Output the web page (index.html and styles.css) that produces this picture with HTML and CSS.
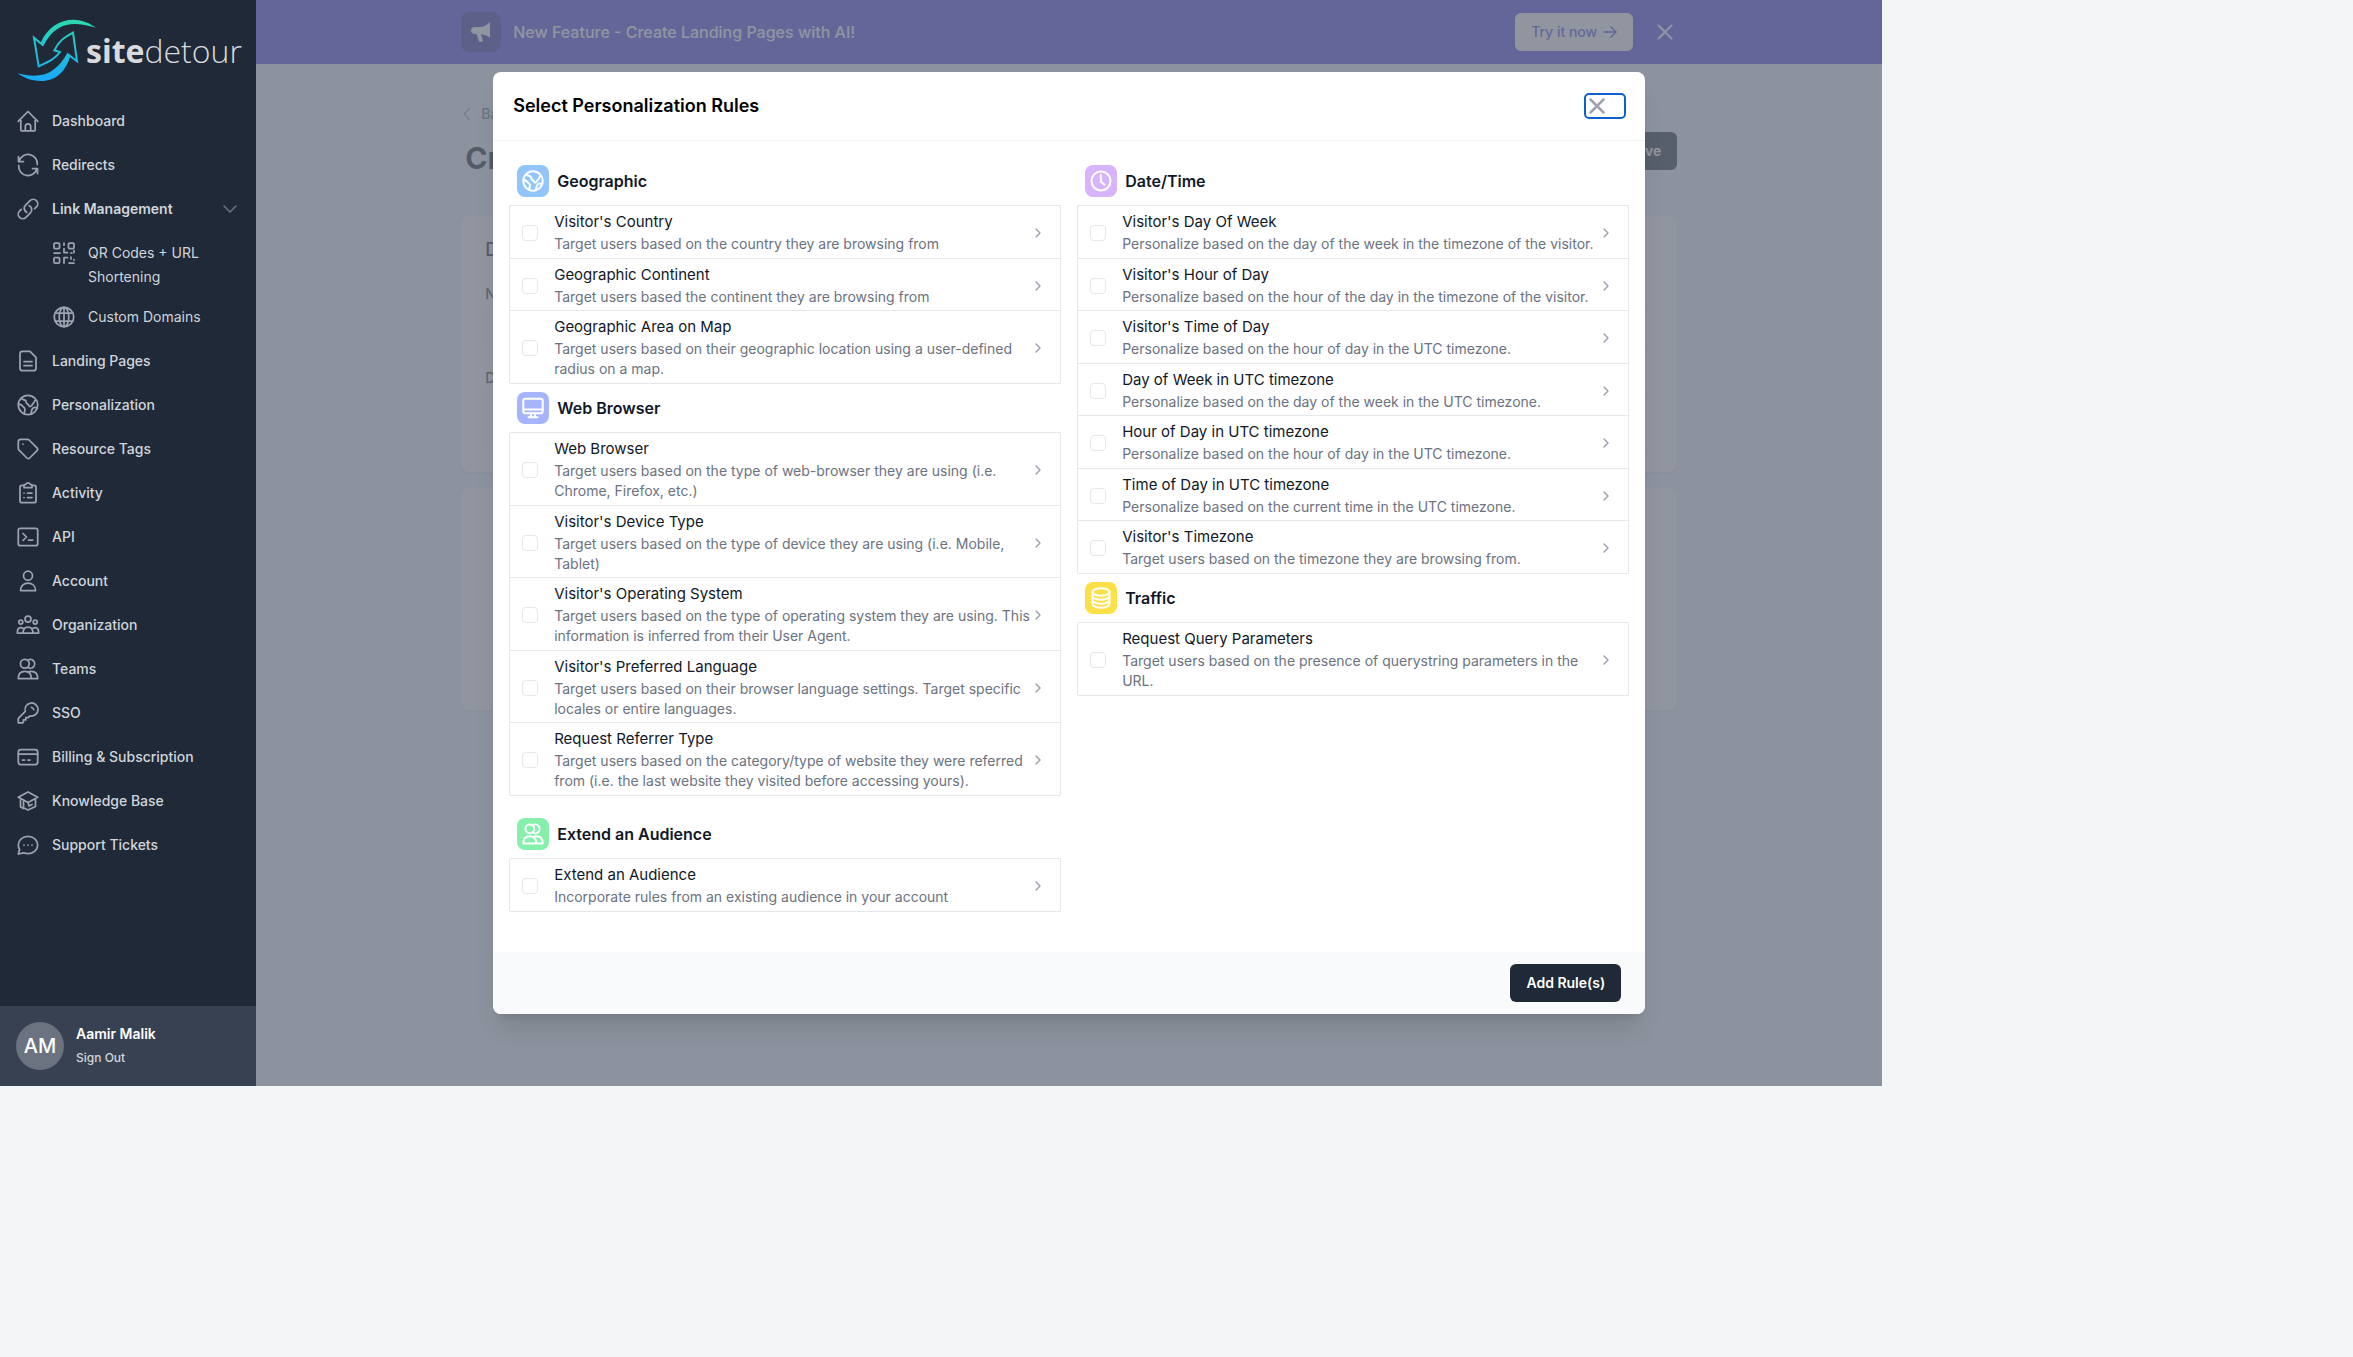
FILE: index.html
```
<!DOCTYPE html>
<html lang="en">
<head>
    <meta charset="UTF-8">
    <meta name="viewport" content="width=device-width, initial-scale=1.0">
    <title>Select Personalization Rules</title>
    <link rel="stylesheet" href="styles.css">
</head>
<body>
    <!-- Shared icons -->
    <svg class="sprite" aria-hidden="true">
        <symbol id="i-home" viewBox="0 0 24 24"><path d="M2.2 12.3 12 2.5l9.8 9.8M4.8 9.8v11c0 .6.4 1 1 1h12.4c.6 0 1-.4 1-1v-11M9.3 21.8v-4.3a2.7 2.7 0 0 1 5.4 0v4.3"/></symbol>
        <symbol id="i-refresh" viewBox="0 0 24 24"><path d="M2.5 3.5v5h5M3 8.5a9.3 9.3 0 0 1 18.3 3M21.5 20.5v-5h-5M21 15.5a9.3 9.3 0 0 1-18.3-3"/></symbol>
        <symbol id="i-link" viewBox="0 0 24 24"><path d="M13.19 8.688a4.5 4.5 0 0 1 1.242 7.244l-4.5 4.5a4.5 4.5 0 0 1-6.364-6.364l1.757-1.757m13.35-.622 1.757-1.757a4.5 4.5 0 0 0-6.364-6.364l-4.5 4.5a4.5 4.5 0 0 0 1.242 7.244"/></symbol>
        <symbol id="i-qr" viewBox="0 0 24 24"><rect x="2" y="2" width="5.5" height="5.5" rx="1"/><rect x="16.5" y="2" width="5.5" height="5.5" rx="1"/><rect x="2" y="16.5" width="5.5" height="5.5" rx="1"/><path d="M12 2v2M12 7.500v4h3.500M2 12h6M19 12h1M22 9.500v2M12 22v-5.500h3.500M19 16v2M17 22h5M22 18.500v.5"/></symbol>
        <symbol id="i-globe" viewBox="0 0 24 24"><circle cx="12" cy="12" r="9.7"/><ellipse cx="12" cy="12" rx="4.8" ry="9.7"/><path d="M12 2.3v19.4M3.3 8h17.4M3.3 16h17.4"/></symbol>
        <symbol id="i-doc" viewBox="0 0 24 24"><path d="M14 2.300H6.500a2.500 2.500 0 0 0-2.500 2.500v14.400a2.500 2.500 0 0 0 2.500 2.500h11a2.500 2.500 0 0 0 2.500-2.500V8.300zM8 12.500h8M8 16.500h8"/></symbol>
        <symbol id="i-world" viewBox="0 0 24 24"><circle cx="12" cy="12" r="9.7"/><path d="M5.500 5c1 2.500 2.700 1.500 4 2.500s0 2.700 2 3.500 1 3 3 2.500 1.500-2.500 3-3.500.5-2.500 2-3M2.500 11c2 0 3 .5 4 2s2.700 1.500 2.500 3.500-1 3-.8 4.500M21 15c-2-1-4.500-.5-5 1.500s-1 2.500-.8 4.500"/></symbol>
        <symbol id="i-tag" viewBox="0 0 24 24"><path d="M2.300 4.800a2.500 2.500 0 0 1 2.500-2.500h6.500c.7 0 1.300.3 1.800.7l7.900 7.900a2 2 0 0 1 0 2.800l-7.300 7.300a2 2 0 0 1-2.800 0L3 13.100a2.500 2.500 0 0 1-.7-1.800zM7 7h.01"/></symbol>
        <symbol id="i-clipboard" viewBox="0 0 24 24"><path d="M8 4.300H6a2 2 0 0 0-2 2v13.400a2 2 0 0 0 2 2h12a2 2 0 0 0 2-2V6.300a2 2 0 0 0-2-2h-2M8 6.500h8V4.800a1.500 1.500 0 0 0-1.500-1.500h-.4a2.200 2.200 0 0 0-4.200 0h-.4A1.500 1.500 0 0 0 8 4.800zM8 12h.01M11.500 12H16M8 16.500h.01M11.500 16.500H16"/></symbol>
        <symbol id="i-terminal" viewBox="0 0 24 24"><rect x="2.3" y="3.3" width="19.4" height="17.4" rx="2"/><path d="m7 8.500 3.500 3.500L7 15.500M12.500 15h4.200"/></symbol>
        <symbol id="i-user" viewBox="0 0 24 24"><circle cx="12" cy="6.7" r="4.5"/><path d="M4.500 21.500c0-4.700 3.300-7.300 7.500-7.300s7.500 2.600 7.500 7.300z"/></symbol>
        <symbol id="i-group" viewBox="0 0 24 24"><circle cx="12" cy="6" r="3"/><circle cx="4.8" cy="9" r="2"/><circle cx="19.2" cy="9" r="2"/><path d="M7 20c0-3.700 2-6 5-6s5 2.300 5 6zM7 20H1.300c0-3.700 1.400-5.500 3.500-5.500 1 0 1.900.3 2.500 1M17 20h5.700c0-3.700-1.400-5.500-3.500-5.500-1 0-1.900.3-2.500 1"/></symbol>
        <symbol id="i-users" viewBox="0 0 24 24"><circle cx="8.8" cy="6.8" r="4.4"/><path d="M11.500 3.400a4.400 4.400 0 1 1 0 6.900M2.300 21.500c0-4.500 2.500-7.200 6.500-7.200s6.500 2.700 6.500 7.200zM12 14.800c1-.3 2-.5 3.200-.5 4 0 6.500 2.700 6.500 7.200h-6.400"/></symbol>
        <symbol id="i-key" viewBox="0 0 24 24"><path d="M9.300 10.300A6.500 6.500 0 1 1 14 14.800l-1.800 1.700h-2.400v2.400H7.400v2.300l-.8.600H2.300v-4.500zM15.500 6.500c1.200.2 2 .9 2.200 2.200"/></symbol>
        <symbol id="i-card" viewBox="0 0 24 24"><rect x="2.3" y="4.5" width="19.4" height="15" rx="2.5"/><path d="M2.300 9h19.400M6.500 15h2M12 15h2"/></symbol>
        <symbol id="i-cap" viewBox="0 0 24 24"><path d="M2.300 8.300 12 3l9.700 5.300L12 13.500 7.500 11v8.500M2.300 8.300l5.200 2.700M4.500 11v7l3 1.500M19.500 10.500v7L12 21l-3-1.500M12 13.500l1 3.500 3-1.500"/></symbol>
        <symbol id="i-chat" viewBox="0 0 24 24"><path d="M12 3.300c5.400 0 9.700 3.900 9.700 8.700s-4.300 8.700-9.700 8.700c-1.500 0-3-.3-4.200-.9L2.300 21l1.300-4.500A8.200 8.200 0 0 1 2.300 12c0-4.800 4.300-8.700 9.700-8.700zM8 12h.01M12 12h.01M16 12h.01"/></symbol>
        <symbol id="i-monitor" viewBox="0 0 24 24"><rect x="2.3" y="2.8" width="19.4" height="14.5" rx="2"/><path d="M2.300 13.500h19.400M10 17.500v3.300M14 17.500v3.300M7.500 21.200h9"/></symbol>
        <symbol id="i-clock" viewBox="0 0 24 24"><circle cx="12" cy="12" r="9.5"/><path d="M11.800 6v6.500l3.700 3.200"/></symbol>
        <symbol id="i-database" viewBox="0 0 24 24"><ellipse cx="12" cy="6" rx="8.5" ry="3.7"/><path d="M3.500 6v12c0 2 3.800 3.700 8.500 3.700s8.500-1.700 8.500-3.700V6M3.500 10c0 2 3.800 3.700 8.500 3.700s8.500-1.700 8.500-3.700M3.500 14c0 2 3.800 3.700 8.500 3.700s8.500-1.700 8.500-3.700"/></symbol>
        <symbol id="i-close" viewBox="0 0 24 24"><path d="m5.500 5.500 13 13M18.500 5.500l-13 13"/></symbol>
        <symbol id="i-chevron" viewBox="0 0 8 12"><path d="m2 2 4 4-4 4"/></symbol>
    </svg>

    <div class="app">
        <aside class="sidebar">
            <a class="logo" href="#">
                <svg class="logo-mark" viewBox="18 24 240 195" aria-hidden="true">
                    <defs>
                        <linearGradient id="logo-line" gradientUnits="userSpaceOnUse" x1="0" y1="30" x2="0" y2="215">
                            <stop offset="0" stop-color="#2cd9b0"/>
                            <stop offset="1" stop-color="#18a8fb"/>
                        </linearGradient>
                    </defs>
                    <path fill="url(#logo-line)" d="M92 98C112 52 150 29 190 29c28 0 50 11 68 24-46-14-82-16-110 0-22 13-36 31-48 55z"/>
                    <path fill="url(#logo-line)" d="M22 190c46 12 82 10 110-12 18-14 30-30 40-50l9 10c-14 46-42 75-88 75-30 0-52-10-71-23z"/>
                    <path fill="none" stroke="url(#logo-line)" stroke-width="6" stroke-linejoin="miter" d="M98 105 72 83l14 86c38-18 52-26 64-43l-17-5c14-28 28-38 56-53l12 86-26-20"/>
                </svg>
                <span class="logo-text"><b>site</b>detour</span>
            </a>
            <nav class="nav">
                <a class="nav-item" href="#"><svg class="icon"><use href="#i-home"/></svg>Dashboard</a>
                <a class="nav-item" href="#"><svg class="icon"><use href="#i-refresh"/></svg>Redirects</a>
                <button class="nav-item nav-toggle" type="button">
                    <svg class="icon"><use href="#i-link"/></svg>Link Management
                    <svg class="nav-arrow" viewBox="0 0 20 20"><path d="m4 7 6 6 6-6"/></svg>
                </button>
                <div class="subnav">
                    <a class="nav-item" href="#"><svg class="icon"><use href="#i-qr"/></svg>QR Codes + URL Shortening</a>
                    <a class="nav-item" href="#"><svg class="icon"><use href="#i-globe"/></svg>Custom Domains</a>
                </div>
                <a class="nav-item" href="#"><svg class="icon"><use href="#i-doc"/></svg>Landing Pages</a>
                <a class="nav-item" href="#"><svg class="icon"><use href="#i-world"/></svg>Personalization</a>
                <a class="nav-item" href="#"><svg class="icon"><use href="#i-tag"/></svg>Resource Tags</a>
                <a class="nav-item" href="#"><svg class="icon"><use href="#i-clipboard"/></svg>Activity</a>
                <a class="nav-item" href="#"><svg class="icon"><use href="#i-terminal"/></svg>API</a>
                <a class="nav-item" href="#"><svg class="icon"><use href="#i-user"/></svg>Account</a>
                <a class="nav-item" href="#"><svg class="icon"><use href="#i-group"/></svg>Organization</a>
                <a class="nav-item" href="#"><svg class="icon"><use href="#i-users"/></svg>Teams</a>
                <a class="nav-item" href="#"><svg class="icon"><use href="#i-key"/></svg>SSO</a>
                <a class="nav-item" href="#"><svg class="icon"><use href="#i-card"/></svg>Billing &amp; Subscription</a>
                <a class="nav-item" href="#"><svg class="icon"><use href="#i-cap"/></svg>Knowledge Base</a>
                <a class="nav-item" href="#"><svg class="icon"><use href="#i-chat"/></svg>Support Tickets</a>
            </nav>
            <div class="profile">
                <span class="avatar">AM</span>
                <div>
                    <p class="profile-name">Aamir Malik</p>
                    <a class="sign-out" href="#">Sign Out</a>
                </div>
            </div>
        </aside>

        <div class="main">
            <div class="banner">
                <div class="container banner-inner">
                    <span class="banner-icon">
                        <svg viewBox="0 0 24 24"><path d="M21 2v15.500c-3-2-6-3-9-3.200l2 6.700c-1.500 1-3 1.200-4 .5L7.500 14H6c-2.500 0-4-1.500-4-3.500S3.500 7 6 7h4c4 0 8-2 11-5z"/></svg>
                    </span>
                    <p class="banner-text">New Feature - Create Landing Pages with AI!</p>
                    <a class="banner-link" href="#">Try it now <svg viewBox="0 0 14 12"><path d="M1 6h12M8 1l5 5-5 5"/></svg></a>
                    <button class="banner-close" type="button" aria-label="Dismiss"><svg class="icon"><use href="#i-close"/></svg></button>
                </div>
            </div>
            <div class="container page">
                <a class="back" href="#"><svg viewBox="0 0 20 20"><path d="m12.500 4-5 6 5 6"/></svg>Back</a>
                <div class="page-head">
                    <h1>Create</h1>
                    <button class="save" type="button">Save</button>
                </div>
                <div class="card card-details">
                    <h2>Details</h2>
                    <label for="name">Name</label>
                    <input id="name" type="text">
                    <label for="description">Description</label>
                    <textarea id="description"></textarea>
                </div>
                <div class="card card-rules"></div>
            </div>

            <div class="overlay">
                <div class="modal" role="dialog" aria-labelledby="modal-title">
                    <div class="modal-head">
                        <h2 id="modal-title">Select Personalization Rules</h2>
                        <button class="modal-close" type="button" aria-label="Close"><svg class="icon"><use href="#i-close"/></svg></button>
                    </div>
                    <div class="modal-body">
                        <div class="column">
                            <h3 class="group-title"><span class="badge blue"><svg class="icon"><use href="#i-world"/></svg></span>Geographic</h3>
                            <div class="rules">
                                <label class="rule"><input type="checkbox"><span class="rule-text"><span class="rule-name">Visitor's Country</span><span class="rule-desc">Target users based on the country they are browsing from</span></span><svg class="chevron"><use href="#i-chevron"/></svg></label>
                                <label class="rule"><input type="checkbox"><span class="rule-text"><span class="rule-name">Geographic Continent</span><span class="rule-desc">Target users based the continent they are browsing from</span></span><svg class="chevron"><use href="#i-chevron"/></svg></label>
                                <label class="rule"><input type="checkbox"><span class="rule-text"><span class="rule-name">Geographic Area on Map</span><span class="rule-desc">Target users based on their geographic location using a user-defined radius on a map.</span></span><svg class="chevron"><use href="#i-chevron"/></svg></label>
                            </div>
                            <h3 class="group-title"><span class="badge indigo"><svg class="icon"><use href="#i-monitor"/></svg></span>Web Browser</h3>
                            <div class="rules">
                                <label class="rule"><input type="checkbox"><span class="rule-text"><span class="rule-name">Web Browser</span><span class="rule-desc">Target users based on the type of web-browser they are using (i.e. Chrome, Firefox, etc.)</span></span><svg class="chevron"><use href="#i-chevron"/></svg></label>
                                <label class="rule"><input type="checkbox"><span class="rule-text"><span class="rule-name">Visitor's Device Type</span><span class="rule-desc">Target users based on the type of device they are using (i.e. Mobile, Tablet)</span></span><svg class="chevron"><use href="#i-chevron"/></svg></label>
                                <label class="rule"><input type="checkbox"><span class="rule-text"><span class="rule-name">Visitor's Operating System</span><span class="rule-desc">Target users based on the type of operating system they are using. This information is inferred from their User Agent.</span></span><svg class="chevron"><use href="#i-chevron"/></svg></label>
                                <label class="rule"><input type="checkbox"><span class="rule-text"><span class="rule-name">Visitor's Preferred Language</span><span class="rule-desc">Target users based on their browser language settings. Target specific locales or entire languages.</span></span><svg class="chevron"><use href="#i-chevron"/></svg></label>
                                <label class="rule"><input type="checkbox"><span class="rule-text"><span class="rule-name">Request Referrer Type</span><span class="rule-desc">Target users based on the category/type of website they were referred from (i.e. the last website they visited before accessing yours).</span></span><svg class="chevron"><use href="#i-chevron"/></svg></label>
                            </div>
                            <h3 class="group-title spaced"><span class="badge green"><svg class="icon"><use href="#i-users"/></svg></span>Extend an Audience</h3>
                            <div class="rules">
                                <label class="rule"><input type="checkbox"><span class="rule-text"><span class="rule-name">Extend an Audience</span><span class="rule-desc">Incorporate rules from an existing audience in your account</span></span><svg class="chevron"><use href="#i-chevron"/></svg></label>
                            </div>
                        </div>
                        <div class="column">
                            <h3 class="group-title"><span class="badge purple"><svg class="icon"><use href="#i-clock"/></svg></span>Date/Time</h3>
                            <div class="rules">
                                <label class="rule"><input type="checkbox"><span class="rule-text"><span class="rule-name">Visitor's Day Of Week</span><span class="rule-desc">Personalize based on the day of the week in the timezone of the visitor.</span></span><svg class="chevron"><use href="#i-chevron"/></svg></label>
                                <label class="rule"><input type="checkbox"><span class="rule-text"><span class="rule-name">Visitor's Hour of Day</span><span class="rule-desc">Personalize based on the hour of the day in the timezone of the visitor.</span></span><svg class="chevron"><use href="#i-chevron"/></svg></label>
                                <label class="rule"><input type="checkbox"><span class="rule-text"><span class="rule-name">Visitor's Time of Day</span><span class="rule-desc">Personalize based on the hour of day in the UTC timezone.</span></span><svg class="chevron"><use href="#i-chevron"/></svg></label>
                                <label class="rule"><input type="checkbox"><span class="rule-text"><span class="rule-name">Day of Week in UTC timezone</span><span class="rule-desc">Personalize based on the day of the week in the UTC timezone.</span></span><svg class="chevron"><use href="#i-chevron"/></svg></label>
                                <label class="rule"><input type="checkbox"><span class="rule-text"><span class="rule-name">Hour of Day in UTC timezone</span><span class="rule-desc">Personalize based on the hour of day in the UTC timezone.</span></span><svg class="chevron"><use href="#i-chevron"/></svg></label>
                                <label class="rule"><input type="checkbox"><span class="rule-text"><span class="rule-name">Time of Day in UTC timezone</span><span class="rule-desc">Personalize based on the current time in the UTC timezone.</span></span><svg class="chevron"><use href="#i-chevron"/></svg></label>
                                <label class="rule"><input type="checkbox"><span class="rule-text"><span class="rule-name">Visitor's Timezone</span><span class="rule-desc">Target users based on the timezone they are browsing from.</span></span><svg class="chevron"><use href="#i-chevron"/></svg></label>
                            </div>
                            <h3 class="group-title"><span class="badge yellow"><svg class="icon"><use href="#i-database"/></svg></span>Traffic</h3>
                            <div class="rules">
                                <label class="rule"><input type="checkbox"><span class="rule-text"><span class="rule-name">Request Query Parameters</span><span class="rule-desc">Target users based on the presence of querystring parameters in the URL.</span></span><svg class="chevron"><use href="#i-chevron"/></svg></label>
                            </div>
                        </div>
                    </div>
                    <div class="modal-foot">
                        <button class="add-rules" type="button">Add Rule(s)</button>
                    </div>
                </div>
            </div>
        </div>
    </div>
</body>
</html>
```
FILE: styles.css
```
* {
    box-sizing: border-box;
}
body {
    margin: 0;
    background-color: #f3f5f7;
    font-family: Inter, "Liberation Sans", sans-serif;
    font-size: 14px;
    line-height: 20px;
    color: #111827;
}
h1, h2, h3, p {
    margin: 0;
}
a {
    color: inherit;
    text-decoration: none;
}
button {
    font: inherit;
    border: none;
    padding: 0;
    background: none;
    cursor: pointer;
}
svg {
    flex-shrink: 0;
    fill: none;
    stroke: currentColor;
    stroke-width: 1.5;
    stroke-linecap: round;
    stroke-linejoin: round;
}
.sprite {
    display: none;
}
.icon {
    width: 24px;
    height: 24px;
}
.app {
    display: flex;
    width: 80vw;
    height: 80vh;
    overflow: hidden;
}

/* Sidebar */
.sidebar {
    display: flex;
    flex-direction: column;
    width: 256px;
    flex-shrink: 0;
    background-color: #1f2937;
}
.logo {
    display: flex;
    align-items: center;
    padding: 18px 16px;
}
.logo-mark {
    width: 80px;
    height: 65px;
    stroke: none;
}
.logo-text {
    margin-left: -10px;
    font-family: "Open Sans", "Noto Sans", sans-serif;
    font-size: 32px;
    font-weight: 300;
    line-height: 40px;
    color: #d9dadd;
}
.logo-text b {
    font-weight: 700;
}
.nav {
    flex: 1;
    display: flex;
    flex-direction: column;
    gap: 4px;
    padding: 0 8px;
}
.nav-item {
    display: flex;
    align-items: flex-start;
    gap: 12px;
    padding: 8px;
    font-weight: 500;
    line-height: 24px;
    text-align: left;
    color: #d1d5db;
}
.nav-item .icon {
    stroke-width: 1.75;
    color: #9ca3af;
}
.nav-toggle {
    font-weight: 600;
}
.nav-arrow {
    width: 20px;
    height: 20px;
    margin: 2px 0 0 auto;
    color: #6b7280;
}
.subnav {
    padding-left: 36px;
}
.subnav .nav-item {
    font-weight: 400;
}
.profile {
    display: flex;
    align-items: center;
    gap: 12px;
    height: 80px;
    padding: 16px;
    background-color: #374151;
}
.avatar {
    display: flex;
    align-items: center;
    justify-content: center;
    width: 48px;
    height: 48px;
    border-radius: 50%;
    background-color: #6b7280;
    color: #fff;
    font-size: 20px;
    font-weight: 500;
}
.profile-name {
    font-weight: 600;
    line-height: 24px;
    color: #fff;
}
.sign-out {
    display: block;
    font-size: 12px;
    font-weight: 500;
    line-height: 24px;
    color: #d1d5db;
}

/* Page behind the dialog */
.main {
    position: relative;
    flex: 1;
    min-width: 0;
}
.container {
    max-width: 1280px;
    margin: 0 auto;
    padding: 0 32px;
}
.banner {
    background-color: #4f46e5;
}
.banner-inner {
    display: flex;
    align-items: center;
    height: 64px;
}
.banner-icon {
    display: flex;
    align-items: center;
    justify-content: center;
    width: 40px;
    height: 40px;
    border-radius: 8px;
    background-color: #3730a3;
}
.banner-icon svg {
    width: 24px;
    height: 24px;
    fill: #fff;
    stroke: none;
}
.banner-text {
    flex: 1;
    margin-left: 12px;
    font-size: 16px;
    font-weight: 500;
    color: #fff;
}
.banner-link {
    display: flex;
    align-items: center;
    gap: 6px;
    padding: 9px 16px;
    border-radius: 6px;
    background-color: #fff;
    font-weight: 500;
    color: #4f46e5;
}
.banner-link svg {
    width: 14px;
    height: 12px;
}
.banner-close {
    height: 24px;
    margin-left: 20px;
    color: #fff;
}
.banner-close svg {
    stroke-width: 2;
}
.page {
    padding-top: 40px;
}
.back {
    display: flex;
    align-items: center;
    gap: 4px;
    margin-left: -4px;
    font-weight: 500;
    color: #6b7280;
}
.back svg {
    width: 20px;
    height: 20px;
    color: #9ca3af;
}
.page-head {
    display: flex;
    justify-content: space-between;
    align-items: flex-start;
    margin: 8px 0 40px;
}
.page-head h1 {
    padding: 8px 0 0 4px;
    font-size: 30px;
    font-weight: 700;
    line-height: 36px;
    color: #111827;
}
.save {
    height: 38px;
    padding: 0 16px;
    border-radius: 6px;
    background-color: #1f2937;
    font-weight: 600;
    color: #fff;
}
.card {
    display: flex;
    flex-direction: column;
    margin-bottom: 16px;
    padding: 20px 24px;
    border-radius: 8px;
    background-color: #fff;
    box-shadow: 0 1px 3px rgba(0,0,0,0.1);
}
.card-details {
    min-height: 254px;
}
.card-rules {
    min-height: 222px;
}
.card h2 {
    margin-bottom: 20px;
    font-size: 18px;
    font-weight: 500;
    line-height: 28px;
}
.card label {
    font-weight: 500;
    color: #374151;
}
.card input,
.card textarea {
    height: 38px;
    margin: 4px 0 22px;
    border: 1px solid #f3f4f6;
    border-radius: 6px;
    resize: none;
}
.card textarea {
    height: 60px;
    margin-bottom: 0;
}

/* Dialog */
.overlay {
    position: absolute;
    inset: 0;
    display: flex;
    align-items: center;
    justify-content: center;
    padding: 0 16px;
    background-color: rgba(107,114,128,0.75);
}
.modal {
    width: 100%;
    max-width: 1152px;
    border-radius: 8px;
    overflow: hidden;
    background-color: #fff;
    box-shadow: 0 20px 25px -5px rgba(0,0,0,0.1), 0 8px 10px -6px rgba(0,0,0,0.1);
}
.modal-head {
    display: flex;
    align-items: center;
    justify-content: space-between;
    padding: 20px;
    border-bottom: 1px solid #f3f4f6;
}
.modal-head h2 {
    font-size: 18px;
    font-weight: 600;
    line-height: 28px;
    color: #000;
}
.modal-close {
    display: flex;
    width: 40px;
    height: 24px;
    border-radius: 4px;
    outline: 2px solid #0b5fd0;
    outline-offset: -1px;
    color: #9ca3af;
}
.modal-close .icon {
    stroke-width: 2.5;
}
.modal-body {
    display: grid;
    grid-template-columns: 1fr 1fr;
    gap: 16px;
    padding: 16px 16px 40px;
}
.group-title {
    display: flex;
    align-items: center;
    gap: 8px;
    padding: 8px;
    font-size: 16px;
    font-weight: 600;
}
.spaced {
    margin-top: 14px;
}
.badge {
    display: flex;
    align-items: center;
    justify-content: center;
    width: 32px;
    height: 32px;
    border-radius: 8px;
    color: #fff;
}
.badge .icon {
    stroke-width: 2;
}
.blue {
    background-color: #93c5fd;
}
.indigo {
    background-color: #a5b4fc;
}
.green {
    background-color: #86efac;
}
.purple {
    background-color: #d8b4fe;
}
.yellow {
    background-color: #fde047;
}
.rules {
    border: 1px solid #e5e7eb;
    border-bottom: none;
    border-radius: 2px;
}
.rule {
    display: flex;
    align-items: center;
    padding: 6px 18px 4px 12px;
    border-bottom: 1px solid #e5e7eb;
    cursor: pointer;
}
.rule:nth-child(even) {
    padding-bottom: 3px;
}
.rule input {
    appearance: none;
    flex-shrink: 0;
    width: 16px;
    height: 16px;
    margin: 0 16px 0 0;
    border: 1px solid #e5e7eb;
    border-radius: 4px;
    background-color: #fff;
}
.rule-text {
    display: flex;
    flex: 1;
    flex-direction: column;
    gap: 2px;
}
.rule-name {
    font-size: 15px;
}
.rule-desc {
    color: #6b7280;
}
.chevron {
    width: 8px;
    height: 12px;
    color: #9ca3af;
}
.modal-foot {
    display: flex;
    justify-content: flex-end;
    padding: 12px 24px;
    background-color: #f9fafb;
}
.add-rules {
    height: 38px;
    padding: 0 16px;
    border-radius: 6px;
    background-color: #1f2937;
    font-weight: 600;
    color: #fff;
}
```
